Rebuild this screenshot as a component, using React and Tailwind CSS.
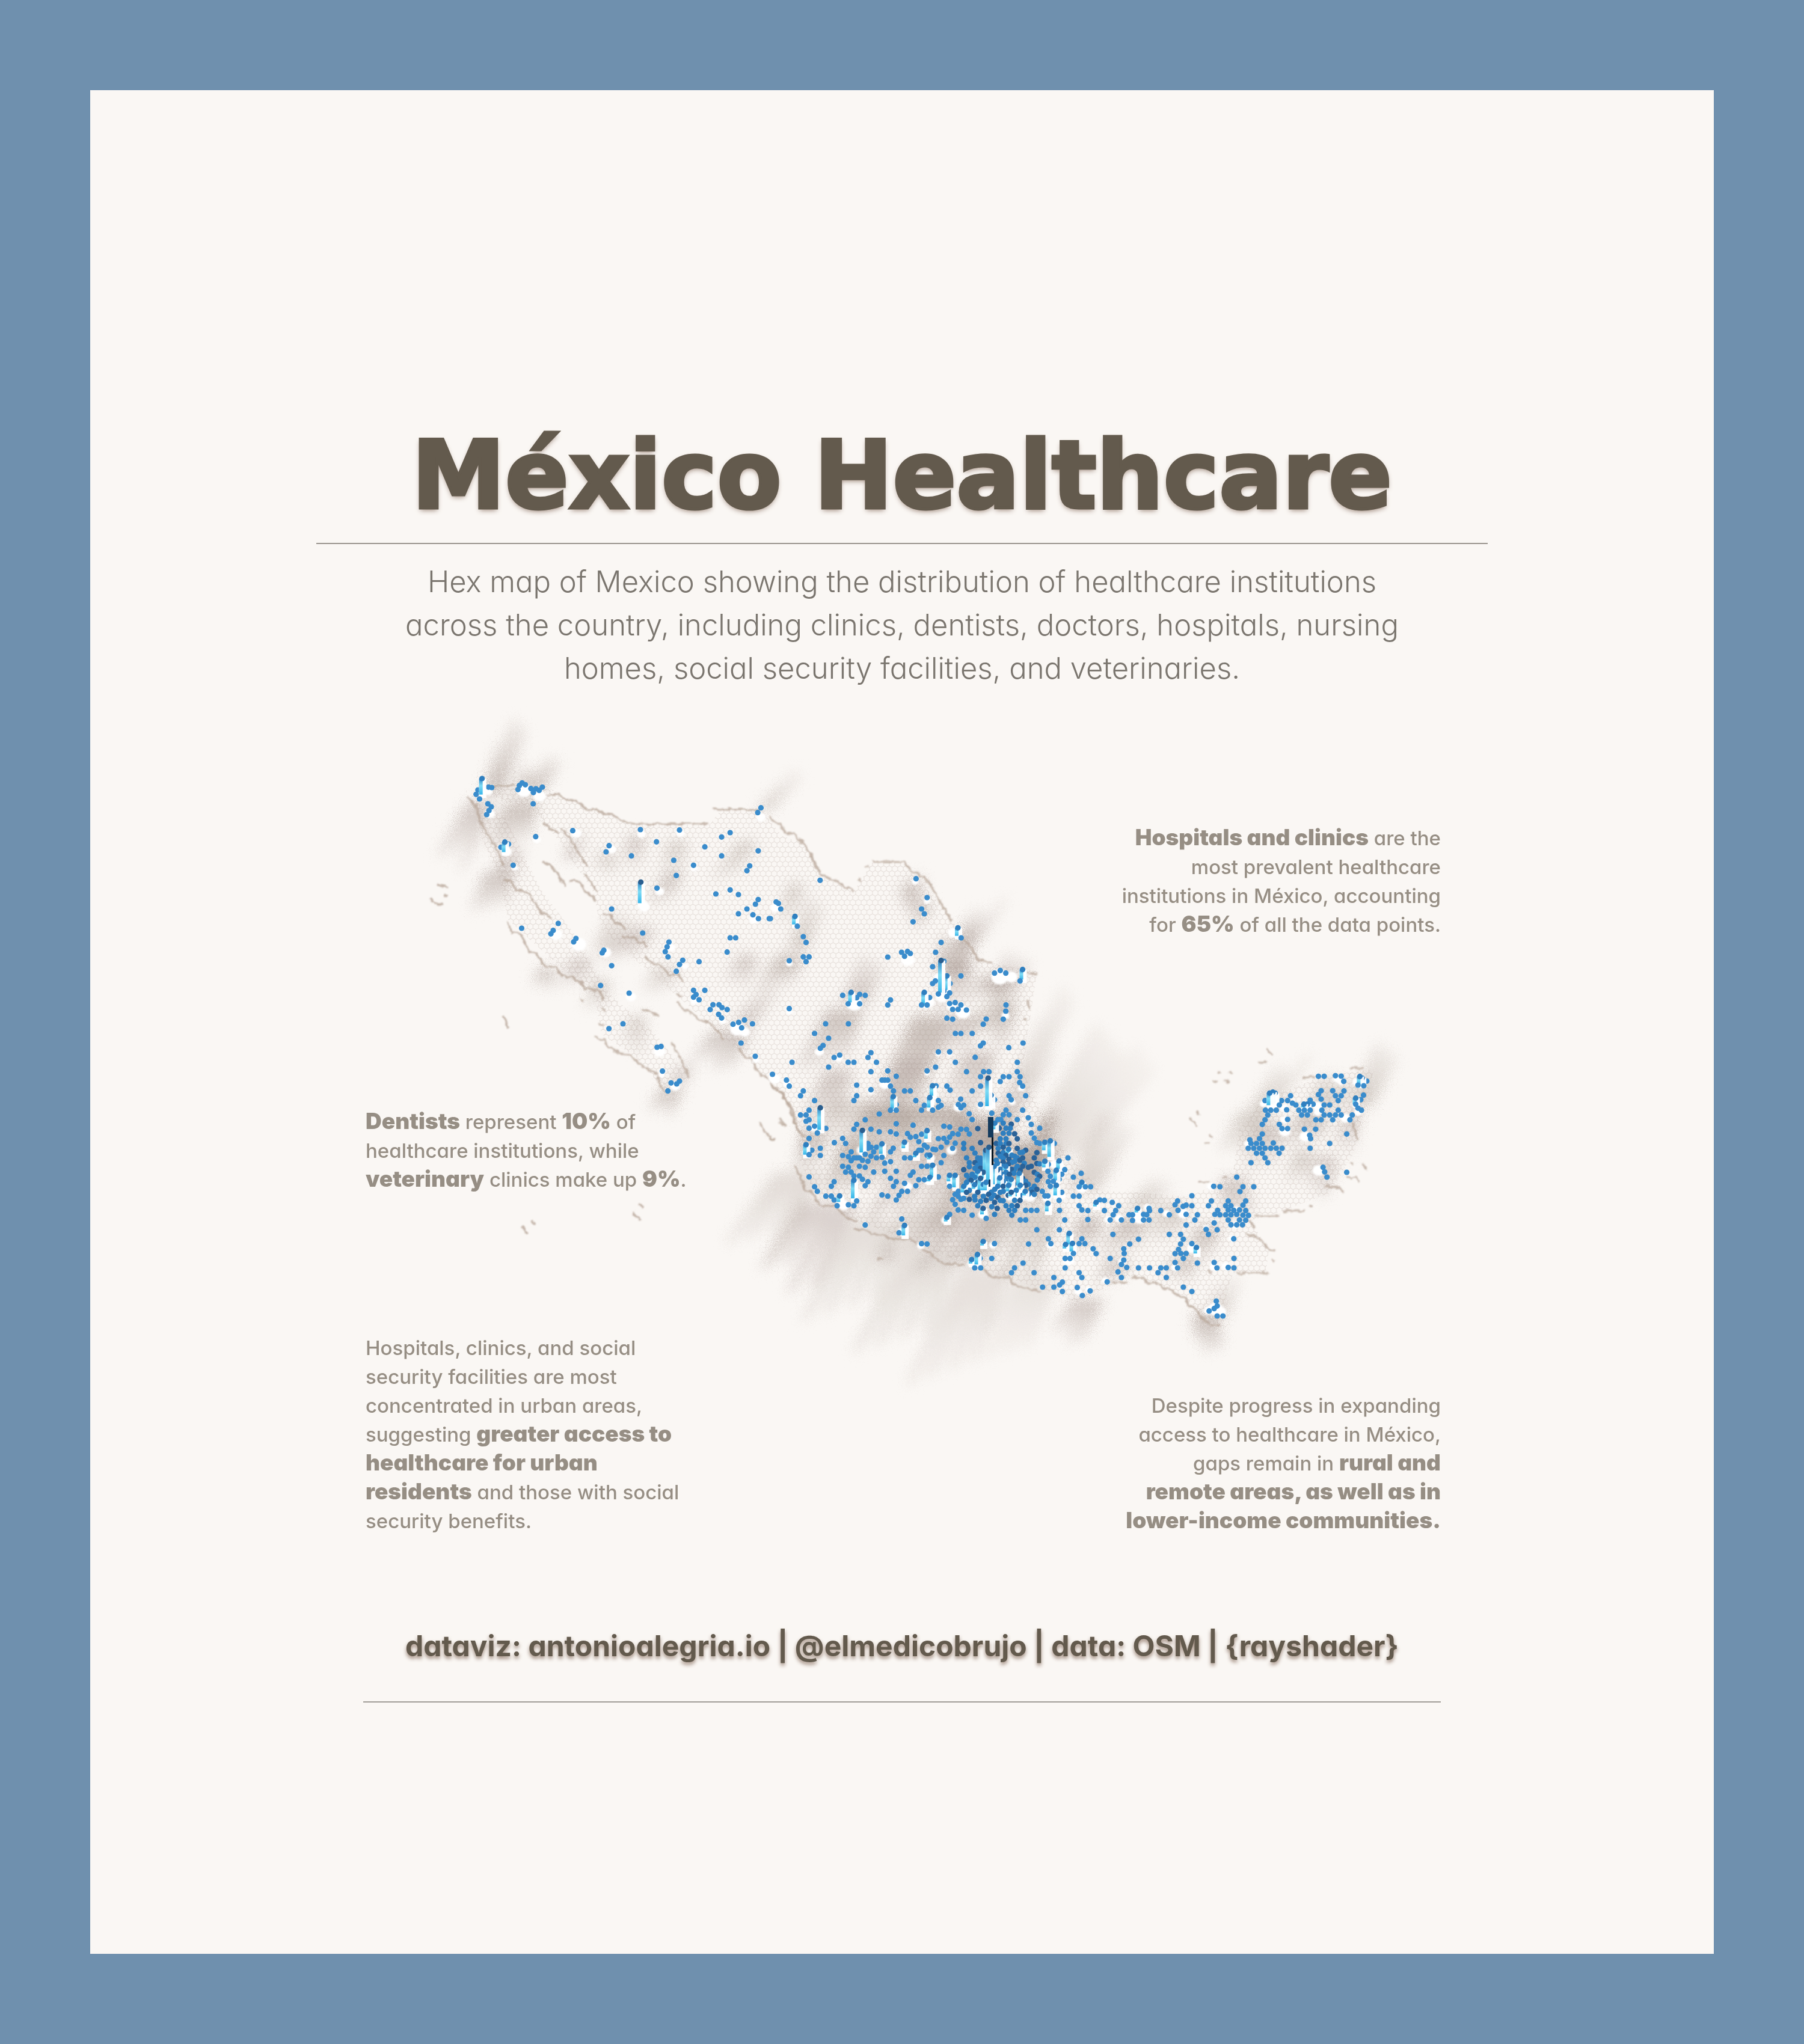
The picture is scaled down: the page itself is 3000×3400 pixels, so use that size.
const SX = 600 / 1568;
const SY = 1 / 3;

/* Map sheets: origin on the map, unit scale, and points as "x y [column height]". */
const SHEETS = [
  {
    x: 680, y: 1180, sx: SX, sy: SY,
    points:
      "292 424;307 447;300 402;318 345 80;346 388;360 390;343 471;358 486;348 505;338 525;474 400;480 380;492 367;506 376;530 395;552 396;541 415;580 388;566 404;540 471;712 605;551 635;417 662 50;400 688;433 672;453 778;870 680;857 711;1006 600;1076 661;1176 602;967 731;1151 753;1162 829;1237 778;1286 686;1359 637;1396 615;1359 731;1518 706;1481 781;1469 805;1530 491;1516 515;1008 862 105;1078 892;881 996;1334 921;1396 901;1432 924;1518 949;1506 972;1469 996;1432 1020;1495 1025;1519 1044;1566 1044;1016 1116;649 1068;490 1092;627 1103;617 1120;726 1143;716 1160;847 1202;840 1215;881 1279;1130 1161;1122 1185;1114 1209;1126 1235;1190 1252;1176 1273;1162 1307;1261 1259;1396 1140;1420 1140;1383 1211;833 1378;957 1416;1237 1402;1286 1402;1248 1423;1237 1436;1261 1449",
    glints:
      "500 404 26;345 408 16;568 432 22;352 520 18;425 710 18;460 790 12;556 650 14;728 618 18;882 698 16;1010 622 15;1180 618 15;1530 538 17;1238 792 13;1090 908 16;640 1124 22;738 1172 26;855 1214 20;1138 1188 16;965 1434 18;1498 1050 16;1022 984 20;1240 1456 14;1200 1282 12",
    coast:
      "M255 440L290 480 310 560 350 640 380 690 410 780M415 855L445 855 465 905 495 905 525 925 575 1015 600 1022 620 1050M425 1065L450 1115 485 1120 525 1210 555 1220 590 1285 640 1283 665 1330 715 1335 725 1355 750 1360 765 1395 790 1395 830 1405 850 1450M350 384L460 378M600 425L650 425 685 450 725 455 770 497 820 500 850 522 885 525 910 545 955 570 1305 572M1320 497L1530 500M585 565L615 595 650 615M665 590L720 680 775 785M580 760L625 785 680 885M700 855L740 858 770 915 800 935 815 955M765 820L818 908M838 1020L875 1020 890 1060 925 1075 940 1100M925 1135L985 1140 1000 1165 1020 1165 1035 1190M1025 1230L1050 1260 1110 1290 1130 1325 1170 1325 1195 1360M90 945L115 972 145 972M125 880L165 885M150 925L168 935",
  },
  {
    x: 1280, y: 1280, sx: SX, sy: SY,
    points:
      "219 553;28 661;38 668;48 696;3 744;110 733 40;120 782;146 834;158 863;85 954;146 935;171 935;158 959;636 545;684 639;660 696;672 720;623 760;818 790 40;832 840;745 863;721 912;573 912;599 908;611 918;586 932;513 936;708 984;745 953 160;757 957;770 1030 70;831 1030;720 1055;708 1068;784 1068;733 1120;757 1105;782 1115;770 1133;672 1112 60;695 1138;660 1175;684 1175;782 1168;806 1163;831 1175;795 1197;819 1197;855 1200;770 1241;795 1246;977 1016;1002 1003;1026 1016;1099 998 50;1088 1055;317 1127;354 1112 50;391 1122;415 1127;366 1141;378 1139;341 1169;391 1169;525 1150;513 1175;1027 1175;1026 1206;1015 1246;941 1245;85 1193",
    glints:
      "25 690 18;632 560 12;684 656 12;800 815 20;600 950 24;1000 1035 30;1050 1035 22;368 1168 28;740 1040 22;750 1132 24;840 1210 26;1025 1228 14;690 1160 22;790 1180 18;85 968 12;85 1208 12",
    coast:
      "M0 235L20 265 45 270 70 318 100 320 150 370 180 430 205 490 230 530 290 555 330 590 370 605M450 460L585 462 615 510 640 515 690 560 730 640 790 755M830 830L870 880 905 950 965 965M1110 1010L1165 1020M1120 1150L1130 1190M1105 1240L1115 1250M385 548L398 555M418 482L430 486",
  },
  {
    x: 900, y: 1500, sx: SY, sy: SY,
    points:
      "857 514;887 514;843 538;902 528;928 538;885 562;900 580;1014 590;985 602;957 611;1054 609;1000 629;997 705;1068 771;408 609;338 633;598 722;578 726;605 845;648 904;690 895;676 909;632 944",
    glints: "980 635 26;1015 650 18;590 748 20;668 920 18;1070 790 12;600 862 12;1158 880 18;1225 908 14;905 596 12;1384 750 14",
    coast:
      "M680 500L710 540 745 550 790 588 830 600 865 625 910 690M990 730L1015 780 1050 780 1065 820 1100 870 1140 880 1150 920 1170 940 1200 950 1235 1020 1265 1100 1290 1150M270 670L290 685 315 685 330 715 385 755 440 760 495 815 550 845 585 860 585 905 620 950M500 540L540 545 585 570M650 700L700 790 740 885M1090 1100L1130 1170 1170 1190M1190 1080L1220 1120M190 488L212 492M680 460L700 472M285 605L310 615M295 530L320 542",
  },
  {
    x: 1280, y: 1700, sx: SX, sy: SY,
    points:
      "243 9;342 9;928 11;195 57;256 81;807 57;831 57;880 57;232 117;220 131;928 105;916 119;1101 105;1039 128;280 177;304 165;341 201;366 201;427 177;440 153;464 201;97 201;256 225;733 149;782 149;893 176;807 201;1076 201;721 225;684 244;513 244;440 248;550 271;12 261;73 290;85 320;146 344;134 368;195 392;378 315;378 368;366 392;440 338;488 290;500 290;513 290;525 320;538 344;586 344;611 344;635 392;537 372 60;525 440;550 440;550 412;708 318 50;723 319;770 320;784 340;696 377 50;733 392;672 416;745 416;733 425;660 440;708 440;830 385;820 412;831 428;171 440;134 464;158 464;158 495;171 488;171 530;195 520;220 428 110;244 531;207 554;171 581;317 581;281 602;330 606;220 630;158 612 50;183 640;171 662;220 666;171 773;195 822;207 845;378 511;366 535;415 488;476 459;440 535;476 548;403 541 110;525 548;550 559;550 508;623 515;599 557;611 575;660 560;684 542 40;635 572;586 600 30;648 597;672 615;733 582;757 581;782 575;757 520;782 524;795 557;819 560;831 535;806 605;770 600;795 630;745 625;721 637;684 625;710 635;660 640;635 655 20;648 640;696 665 20;684 665;611 678;586 678;757 666;745 702;537 630;525 648;488 608 50;464 625;440 625;452 648;427 606;427 630;415 660;440 670;464 678;488 675;427 695;403 690;390 678;378 678;354 648;342 672;366 678;317 666;354 692;317 720;342 725;390 720;415 725;330 749;354 749;390 768;452 749;500 704;525 697;500 745;550 745;366 768;403 785;427 797;415 817;366 790 90;280 797;268 820;244 869;268 869;304 868 30;280 888;293 917;342 912;366 917;378 893;525 780;550 797;538 820;586 805;599 845;574 845;562 865;550 888;488 863;513 869;611 765;623 749;635 817;648 787;672 787;696 775 20;708 715 60;684 720;660 720;733 773;782 765 30;806 765 60;782 820;574 983;586 1015 50;562 1052;415 1013;660 1106;684 1108;770 975 20;782 960;806 860;795 887;820 870;820 845;806 910;819 938;831 885;928 1095 20;977 1106;1125 1108;1211 1082;1222 1106;1161 1037;1259 1037;903 1160 50;878 1185 20;915 1180;891 1227;917 1227;965 1180;1101 1203;1064 1227;1051 1251;1149 1251;1284 1227;1235 1275;1272 1298;1186 1323;1235 1323;1260 1312;1272 1345;1302 1055 60;1286 1110 20;1316 1105 40;1284 1180;1305 1180;1320 1155",
    glints:
      "222 150 12;300 182 14;500 310 20;212 520 16;190 530 14;400 640 18;440 350 10;684 256 10;733 160 10;782 160 10;820 425 18;700 400 16;585 625 12;790 640 18;700 680 14;690 790 18;600 820 16;370 860 16;310 885 14;320 915 20;580 1045 18;655 1118 14;765 990 16;880 1205 16;1220 1114 14;1300 1190 20;970 1114 14;800 800 16;635 670 12;25 285 18;510 700 10;160 650 14",
    coast:
      "M0 310L45 345 100 440 115 520 150 580M110 720L140 790 155 840 185 850 215 915 290 920 330 975 380 995M370 1035L430 1040 440 1060 490 1062 520 1080 625 1085 640 1120 700 1155 715 1180 760 1205 850 1210M925 1230L965 1275 1040 1275 1050 1300 1080 1320 1180 1345M40 495L65 520M0 585L30 588M470 1180L495 1185",
  },
  {
    x: 1600, y: 1780, sx: SY, sy: SY,
    points:
      "22 8;107 8;134 8;92 33;205 33;234 33;190 57;275 8;289 33;287 62;302 80;317 128;50 104;92 80;130 40 140;145 125 50;162 148;92 171;8 175;35 218;50 247;234 128;245 148;148 215;219 200;205 223;234 223;302 200;275 247;330 238;345 271;387 290;22 296;36 319;78 292;8 366;50 391;64 414;22 438;92 362;78 438;8 391;163 265 30;178 247;193 247;205 265;185 290;219 290;245 270;240 290;205 315;234 315;262 318;275 343;219 343;190 343;170 366;190 366;205 385;219 366;234 366;345 314;360 340;373 362;387 366;413 360 40;440 353 80;460 366;275 391;289 412;317 400;302 410;373 412;360 438;528 438;205 412;180 391;262 430;275 438;302 438;248 425;219 425;190 430;170 450;373 466;387 468;413 455 30;430 470;484 453 40;330 485;302 480;275 480;262 495;230 470;245 495;205 480;190 495;219 510;205 440;234 445;180 415;205 460;250 460;36 462;36 482;64 462;92 462;78 475;92 440;106 450;106 475;8 497;50 520;22 525;78 505 50;45 550 20;92 540 60;62 572 20;134 385 190;118 400 120;160 480 90;188 538 40;285 515 60;245 545 40;205 580;178 580;220 540;302 540;317 575;330 570;317 555;270 600 30;345 595;360 510;375 520;387 530;375 548;373 595;360 580;350 610;400 605;428 505;440 530;430 557;440 580;470 500 50;470 575 50;484 545;497 520;512 497;497 610;484 650;428 628;413 628;455 555;8 580 30;36 600;78 610;100 600;120 600;145 610;160 625;178 635;145 640;8 640;36 645;64 648;92 655;120 650;162 660;190 650;205 652;219 677;248 677;275 677;262 650;289 650;234 700;262 700;248 724;290 748;317 748;317 700;345 700;373 700;302 625;330 620;230 625;8 700;50 724;78 677;105 690 30;120 740;148 682;175 690;162 720;428 665 40;486 700;512 748;176 465 20;232 395 20;262 455;288 450;218 480 20;236 520;258 515;310 465;290 500;345 480;78 450;64 490;92 490;106 510 40;64 535 20;78 560 30;106 570 30;120 560 40;150 560;163 595;205 555 20;232 575 30;258 570;290 575 20;205 605;190 610;245 610 20;315 605 20;360 620;220 495;175 500 50;190 520 30;205 520;232 545 20;22 560 20;36 540 20;22 610;62 630;106 630;132 620",
    glints:
      "138 150 16;250 160 12;92 180 12;135 185 12;295 90 12;70 600 18;20 590 16;240 625 22;300 625 22;340 632 20;130 580 14;150 540 14;470 610 18;425 640 16;460 470 18;500 630 14;105 720 18;430 690 14;440 400 14;490 480 14;180 600 16;70 560 16",
    coast: "",
  },
  {
    x: 1780, y: 1700, sx: SX, sy: SY,
    points:
      "13 774;47 755;50 800 20;38 822;65 822;88 822;13 869;38 869;38 917;50 938;76 941;76 986;112 900 20;128 888;148 890;182 900;210 917;197 941;148 941;186 962;173 988;222 988;270 962;255 962;292 930 20;342 930;344 941;318 960;270 990;318 988;342 988;332 962;393 941;430 962;466 893;455 912;468 940;490 920;503 914;528 917;528 867;503 960;552 962;541 988;503 1013;600 917;613 893;623 820;650 822;723 774;750 822;737 846;797 822;686 893;675 917;698 917;686 938;640 940;628 960;650 962;675 962;698 962;686 988;710 940;735 938;762 893;750 914;762 941;723 960;750 964;774 965;735 988;762 989;698 1012;723 1012;748 1012;625 1003;638 1037;590 1035;600 1060;710 1082;185 1060;296 1084;258 1108;50 1082;38 1106;63 1106;99 1132;112 1156;173 1180;430 1060;479 1060;491 1084;479 1108;528 1106;548 1125 30;470 1135;455 1156;480 1155;503 1155;491 1180;455 1200;466 1227;552 1203;296 1227;344 1227;393 1227;417 1227;381 1251;417 1275;232 1132;234 1155;232 1188;222 1210;245 1225;207 1247;222 1275;160 1297;38 1251;50 1275;30 1325;52 1365;86 1342;491 1323;528 1345;625 1200;637 1227;686 1225;711 1227;711 1180;634 1393;638 1417;625 1430;603 1442;638 1467;663 1467;1078 271;1103 271;1152 268;1177 270;1188 296;1258 272 40;1268 280 30;1288 295;1250 315;1275 318;1140 343;1189 344;1152 368;1177 368;1164 392;1090 343;1078 362;1090 385;1103 414;1127 414;1164 440;1103 464;1127 464;1152 464;1177 464;1140 488;1090 488;1067 488;1042 390;1030 410 16;1015 410 16;1042 412;1055 410;993 440;1017 440;1042 440;1005 464;1030 464;1093 440;957 368;944 392;918 392;965 405;980 414;908 414;940 438;846 392;866 355 60;880 350 60;890 355 50;848 440;871 440;895 440;858 464;846 488;834 511;908 511;944 486;920 532;944 532;834 559;822 582;834 606;809 606;780 588;785 606;773 630;797 630;822 630;846 630;871 630;895 630;920 630;882 604;809 655;834 655;846 678;858 702;785 702;907 655;1017 535;1066 535;1040 565;1044 582;1042 630;1127 606;1201 559;1201 750;1098 725;1105 748;1115 774;1274 365;1262 388;1240 380 30;1240 410;1250 430;1265 440;1225 464;1215 488",
    glints:
      "1160 285 14;1175 300 12;1245 300 16;1074 420 18;1074 450 14;1195 480 18;1020 572 20;1080 740 22;840 408 14;930 430 16;932 546 20;772 608 14;930 488 14;610 822 14;1250 450 14;50 828 20;165 985 14;212 980 16;300 980 22;335 925 14;490 955 20;418 955 14;630 1432 26;655 1445 18;530 1130 20;625 1222 16;675 1218 16;455 1225 14;700 1080 12;35 1345 14;78 1335 12;150 1290 12;715 1015 14;225 1195 14;720 935 12;590 1025 10;600 1440 16",
    coast:
      "M180 1300L250 1302M265 1275L320 1278 330 1300 370 1300 400 1325 430 1330 460 1360 500 1380 510 1410 545 1430 575 1480 610 1510 650 1515M720 1252L860 1252M800 966L910 968M925 943L1020 943M765 1060L800 1070 840 1100 860 1135 890 1140M780 990L800 1030M555 800L600 798M660 780L680 775M1110 820L1170 825 1185 850M1200 770L1220 785 1240 775 1260 800M815 203L855 203M855 135L875 165M520 475L550 520M545 440L562 465M583 600L600 610M605 560L618 578M640 255L655 250M690 250L705 260M620 295L640 298M668 295L690 298M1215 228L1275 230M1270 705L1290 740M1225 500L1245 590M1215 700L1230 710M1010 280L1065 272M1035 915L1055 920M875 1180L888 1195M600 1240L615 1252",
  },
];

/* Soft shadows: base x, base y, tip x, tip y, width at the base, opacity */
const SHADES = [
  [818, 1320, 858, 1205, 30, 0.6], [875, 1320, 905, 1265, 44, 0.6], [800, 1335, 745, 1440, 44, 0.5], [868, 1335, 840, 1415, 50, 0.6],
  [840, 1450, 860, 1400, 30, 0.5], [830, 1450, 812, 1510, 44, 0.55], [945, 1430, 965, 1385, 18, 0.5], [1060, 1390, 1045, 1440, 24, 0.5],
  [1128, 1400, 1112, 1450, 26, 0.45], [1122, 1450, 1090, 1510, 26, 0.55], [1070, 1545, 1020, 1600, 40, 0.5], [1245, 1400, 1200, 1460, 26, 0.45],
  [1268, 1350, 1325, 1285, 22, 0.4], [1010, 1420, 1005, 1450, 26, 0.45], [910, 1610, 898, 1645, 26, 0.6], [968, 1595, 945, 1645, 32, 0.5],
  [1000, 1630, 988, 1680, 28, 0.45], [1005, 1580, 1035, 1520, 36, 0.4], [1110, 1610, 1080, 1650, 36, 0.4], [1062, 1690, 1050, 1750, 26, 0.4],
  [1245, 1590, 1220, 1640, 30, 0.5], [1315, 1590, 1280, 1650, 40, 0.6], [1325, 1580, 1360, 1490, 26, 0.45], [1325, 1470, 1305, 1530, 20, 0.45],
  [1235, 1705, 1280, 1645, 26, 0.5], [1215, 1715, 1180, 1775, 60, 0.55], [1118, 1810, 1095, 1855, 34, 0.6], [1125, 1800, 1155, 1760, 24, 0.5],
  [1512, 1510, 1535, 1450, 18, 0.5], [1515, 1470, 1508, 1495, 22, 0.6], [1540, 1500, 1520, 1540, 20, 0.6], [1582, 1620, 1595, 1540, 44, 0.65],
  [1598, 1580, 1650, 1500, 34, 0.5], [1595, 1600, 1580, 1690, 40, 0.5], [1420, 1670, 1455, 1590, 36, 0.5], [1405, 1680, 1365, 1770, 56, 0.55],
  [1550, 1690, 1480, 1860, 60, 0.6], [1520, 1760, 1450, 1890, 50, 0.5], [1655, 1625, 1635, 1665, 40, 0.65], [1665, 1650, 1700, 1580, 40, 0.5],
  [1625, 1710, 1690, 1640, 34, 0.45], [1605, 1690, 1585, 1750, 40, 0.5], [1675, 1670, 1658, 1740, 26, 0.6], [1630, 1750, 1590, 1850, 50, 0.5],
  [1485, 1840, 1450, 1920, 80, 0.8], [1440, 1900, 1420, 1990, 80, 0.7], [1352, 1880, 1340, 1950, 34, 0.6], [1395, 1780, 1360, 1870, 44, 0.5],
  [1570, 1840, 1530, 1900, 80, 0.8], [1640, 1860, 1590, 1950, 90, 0.9], [1650, 1990, 1680, 1860, 120, 1], [1720, 1910, 1680, 1990, 80, 0.8],
  [1660, 1960, 1640, 2010, 140, 0.7], [1580, 1900, 1510, 2020, 110, 0.5], [1620, 2010, 1550, 2110, 110, 0.5], [1710, 2010, 1650, 2120, 110, 0.45],
  [1670, 1860, 1730, 1760, 34, 0.5], [1730, 1910, 1870, 1690, 60, 0.3], [1780, 1920, 1920, 1740, 50, 0.22], [1800, 1980, 1860, 1860, 50, 0.4],
  [1700, 1800, 1770, 1650, 34, 0.3], [1380, 2000, 1300, 2140, 90, 0.42], [1330, 1950, 1240, 2090, 80, 0.3], [1460, 2030, 1380, 2210, 90, 0.28],
  [1550, 2080, 1470, 2250, 90, 0.28], [1640, 2110, 1560, 2290, 80, 0.26], [1730, 2120, 1660, 2250, 70, 0.22], [1810, 2160, 1770, 2230, 50, 0.5],
  [1483, 2080, 1468, 2105, 24, 0.5], [1628, 2070, 1615, 2110, 32, 0.5], [1815, 2025, 1795, 2080, 36, 0.65], [1885, 2025, 1860, 2080, 44, 0.6],
  [1955, 2005, 1925, 2060, 46, 0.45], [2012, 2040, 1985, 2090, 34, 0.65], [1975, 2090, 1950, 2130, 36, 0.6], [1860, 2095, 1840, 2140, 34, 0.55],
  [1890, 2010, 1940, 1960, 34, 0.45], [2050, 1960, 2060, 2030, 40, 0.5], [2003, 2185, 2012, 2245, 36, 0.65], [2025, 2190, 2045, 2125, 28, 0.4],
  [2095, 1850, 2155, 1760, 36, 0.45], [2200, 1840, 2235, 1780, 50, 0.45], [2262, 1840, 2312, 1735, 36, 0.45], [2185, 1850, 2165, 1900, 44, 0.6],
  [2115, 1870, 2085, 1940, 46, 0.5], [2207, 1925, 2190, 1990, 30, 0.5], [2250, 1850, 2232, 1920, 26, 0.5], [2170, 1915, 2155, 1970, 30, 0.45],
  [2085, 1850, 2055, 1915, 46, 0.45], [1560, 2010, 1510, 2080, 80, 0.4], [1420, 1830, 1380, 1900, 60, 0.4],
];

/* Four tapering strands per shadow, fanned around its axis. */
const strands = ([x1, y1, x2, y2, w], i) =>
  [-0.36, -0.12, 0.14, 0.38]
    .map((t, k) => {
      const reach = 0.72 + ((i * 7 + k * 5) % 6) * 0.07;
      const bx = x1 + t * w;
      const tx = x1 + (x2 - x1) * reach + t * w * 1.5;
      const ty = y1 + (y2 - y1) * reach;
      const half = w * 0.17;
      return `M${bx - half} ${y1}L${bx + half} ${y1}L${tx + half * 0.3} ${ty}L${tx - half * 0.3} ${ty}Z`;
    })
    .join("");

const parse = (s) => (s ? s.split(";").map((p) => p.split(" ").map(Number)) : []);

/* Tiles darken towards the dense valley around the capital. */
const tileColor = (cx, cy, h, i) => {
  if (h > 90) return "#2b5f8f";
  const near = Math.hypot(cx - 1662, (cy - 1945) * 0.9) < 72;
  if (near && i % 3 === 0) return "#2a6298";
  if (near || h > 0) return "#2f7fbf";
  return "#3a8ccc";
};

function Sheet({ x, y, sx, sy, points, glints }) {
  const at = ([px, py, extra = 0]) => [x + px * sx, y + py * sy, extra];
  const pts = parse(points).map(at).sort((a, b) => a[1] + a[2] * sy - (b[1] + b[2] * sy));
  return (
    <g>
      <g fill="#ffffff" filter="url(#glint)">
        {parse(glints).map(at).map(([cx, cy, r], i) => (
          <ellipse key={i} cx={cx} cy={cy} rx={r * 0.48} ry={r * 0.42} />
        ))}
      </g>
      {pts.map(([cx, cy, h], i) => (
        <g key={i}>
          {h > 0 && <rect x={cx - 5} y={cy} width="12" height={h * sy + 6} fill="#ffffff" opacity="0.95" />}
          {h > 0 && <rect x={cx - 5} y={cy} width="6" height={h * sy} fill="url(#column)" />}
          <circle cx={cx} cy={cy} r="4.6" fill={tileColor(cx, cy, h, i)} />
        </g>
      ))}
    </g>
  );
}

function HexMap() {
  return (
    <svg viewBox="604 1148 1792 1480" className="col-start-1 row-start-1 block w-full" role="img" aria-label="Hex map of healthcare institutions in Mexico">
      <defs>
        <linearGradient id="column" x1="0" y1="0" x2="0" y2="1">
          <stop offset="0" stopColor="#2f86c6" />
          <stop offset="0.45" stopColor="#7fdcf5" />
          <stop offset="1" stopColor="#35b4e8" />
        </linearGradient>
        <pattern id="hexes" width="9.33" height="16" patternUnits="userSpaceOnUse">
          <path d="M0 2.6L4.67 0 9.33 2.6V8L4.67 10.6 0 8zM4.67 10.6V16" fill="none" stroke="#a8968a" strokeWidth="1" opacity="0.28" />
        </pattern>
        <filter id="glint" x="-10%" y="-10%" width="120%" height="120%">
          <feGaussianBlur stdDeviation="1.6" />
        </filter>
        <filter id="shade" filterUnits="userSpaceOnUse" x="604" y="1148" width="1792" height="1300">
          <feGaussianBlur stdDeviation="8" result="soft" />
          <feTurbulence type="fractalNoise" baseFrequency="0.9" numOctaves="1" seed="4" result="noise" />
          <feDisplacementMap in="soft" in2="noise" scale="70" xChannelSelector="R" yChannelSelector="G" />
        </filter>
        <filter id="shore" filterUnits="userSpaceOnUse" x="604" y="1148" width="1792" height="1300">
          <feTurbulence type="fractalNoise" baseFrequency="0.12" numOctaves="2" seed="9" result="noise" />
          <feDisplacementMap in="SourceGraphic" in2="noise" scale="8" xChannelSelector="R" yChannelSelector="G" />
          <feGaussianBlur stdDeviation="0.8" />
        </filter>
      </defs>
      <g fill="url(#hexes)">
        <path d="M790 1312L905 1310 950 1332 1045 1370 1180 1372 1200 1346 1265 1345 1300 1390 1340 1405 1370 1460 1420 1482 1450 1435 1505 1435 1560 1500 1590 1540 1630 1600 1725 1615 1712 1700 1700 1780 1750 1890 1830 1980 1980 1990 2050 1955 2060 1880 2100 1830 2200 1790 2285 1778 2265 1860 2250 1920 2210 1985 2130 2015 2080 2030 2110 2080 2105 2118 2050 2118 2025 2205 1960 2150 1880 2122 1790 2165 1690 2130 1600 2100 1500 2060 1400 2020 1350 1975 1330 1930 1320 1850 1280 1800 1210 1730 1130 1660 1060 1600 1000 1545 985 1480 930 1400 890 1350z" />
        <path d="M790 1330L840 1360 900 1480 960 1560 1010 1650 1090 1720 1145 1790 1110 1820 1060 1760 1000 1720 990 1660 900 1580 845 1530 830 1460 800 1390z" />
      </g>
      <g filter="url(#shade)" fill="#95847b" opacity="0.74">
        {SHADES.map((s, i) => (
          <path key={i} d={strands(s, i)} opacity={s[5]} />
        ))}
      </g>
      <g filter="url(#shore)">
        {SHEETS.map((s, i) => (
          <path
            key={i}
            d={s.coast}
            transform={`translate(${s.x} ${s.y}) scale(${s.sx} ${s.sy})`}
            fill="none"
            stroke="#b8a699"
            strokeWidth="9"
            strokeLinejoin="round"
            opacity="0.8"
          />
        ))}
        <path d="M868 2040l10 14M884 2030l6 8M1053 2018l12 12M1062 2003l10 5M836 1690l8 12M842 1700l3 10" fill="none" stroke="#b8a699" strokeWidth="4" opacity="0.8" />
      </g>
      {SHEETS.map((s, i) => (
        <Sheet key={i} {...s} />
      ))}
      <path d="M1643 1858h9v34h-9z" fill="#143a5c" />
      <path d="M1649 1892h3v46h-3z" fill="#0b1722" />
      <path d="M1644 1962h3v12h-3z" fill="#143a5c" />
    </svg>
  );
}

function Line({ children }) {
  return <span className="block">{children}</span>;
}

function Strong({ children }) {
  return <strong className="text-[37px] leading-[40px] font-black">{children}</strong>;
}

export default function App() {
  return (
    <main className="w-full bg-[#6f90ae] p-[150px]">
      <article className="w-full bg-[#faf7f4] pt-[561px] pb-[418px] font-['Inter',sans-serif] [font-feature-settings:'cv11']">
        <header className="mx-auto w-full max-w-[1948px] text-center">
          <h1 className="border-b-2 border-[#9a958f] pb-[32px] font-['DejaVu_Sans',sans-serif] text-[156px] leading-[160px] font-bold whitespace-nowrap text-[#635a4d] [-webkit-text-stroke:5px_#635a4d] [text-shadow:0_4px_8px_#a08b7e]">
            México Healthcare
          </h1>
          <p className="pt-[27px] text-[49px] leading-[72px] font-light whitespace-nowrap text-[#7a756e]">
            <Line>Hex map of Mexico showing the distribution of healthcare institutions</Line>
            <Line>across the country, including clinics, dentists, doctors, hospitals, nursing</Line>
            <Line>homes, social security facilities, and veterinaries.</Line>
          </p>
        </header>

        <section className="mx-auto grid w-full max-w-[1792px]">
          <HexMap />
          <div className="col-start-1 row-start-1 flex justify-between pb-[74px] pl-1 text-[33px] leading-[48px] font-medium whitespace-nowrap text-[#968e84]">
            <div className="flex flex-col justify-between pt-[694px]">
              <p>
                <Line><Strong>Dentists</Strong> represent <Strong>10%</Strong> of</Line>
                <Line>healthcare institutions, while</Line>
                <Line><Strong>veterinary</Strong> clinics make up <Strong>9%</Strong>.</Line>
              </p>
              <p>
                <Line>Hospitals, clinics, and social</Line>
                <Line>security facilities are most</Line>
                <Line>concentrated in urban areas,</Line>
                <Line>suggesting <Strong>greater access to</Strong></Line>
                <Line><Strong>healthcare for urban</Strong></Line>
                <Line><Strong>residents</Strong> and those with social</Line>
                <Line>security benefits.</Line>
              </p>
            </div>
            <div className="flex flex-col justify-between pt-[222px] text-right">
              <p>
                <Line><Strong>Hospitals and clinics</Strong> are the</Line>
                <Line>most prevalent healthcare</Line>
                <Line>institutions in México, accounting</Line>
                <Line>for <Strong>65%</Strong> of all the data points.</Line>
              </p>
              <p>
                <Line>Despite progress in expanding</Line>
                <Line>access to healthcare in México,</Line>
                <Line>gaps remain in <Strong>rural and</Strong></Line>
                <Line><Strong>remote areas, as well as in</Strong></Line>
                <Line><Strong>lower-income communities.</Strong></Line>
              </p>
            </div>
          </div>
        </section>

        <footer className="mx-auto mt-[78px] w-full max-w-[1792px] border-b-2 border-[#a19d98] pb-[60px] text-center text-[48px] leading-[64px] font-bold whitespace-nowrap text-[#635a4d] [text-shadow:0_4px_6px_#a08b7e]">
          dataviz: antonioalegria.io | @elmedicobrujo | data: OSM | {"{rayshader}"}
        </footer>
      </article>
    </main>
  );
}
